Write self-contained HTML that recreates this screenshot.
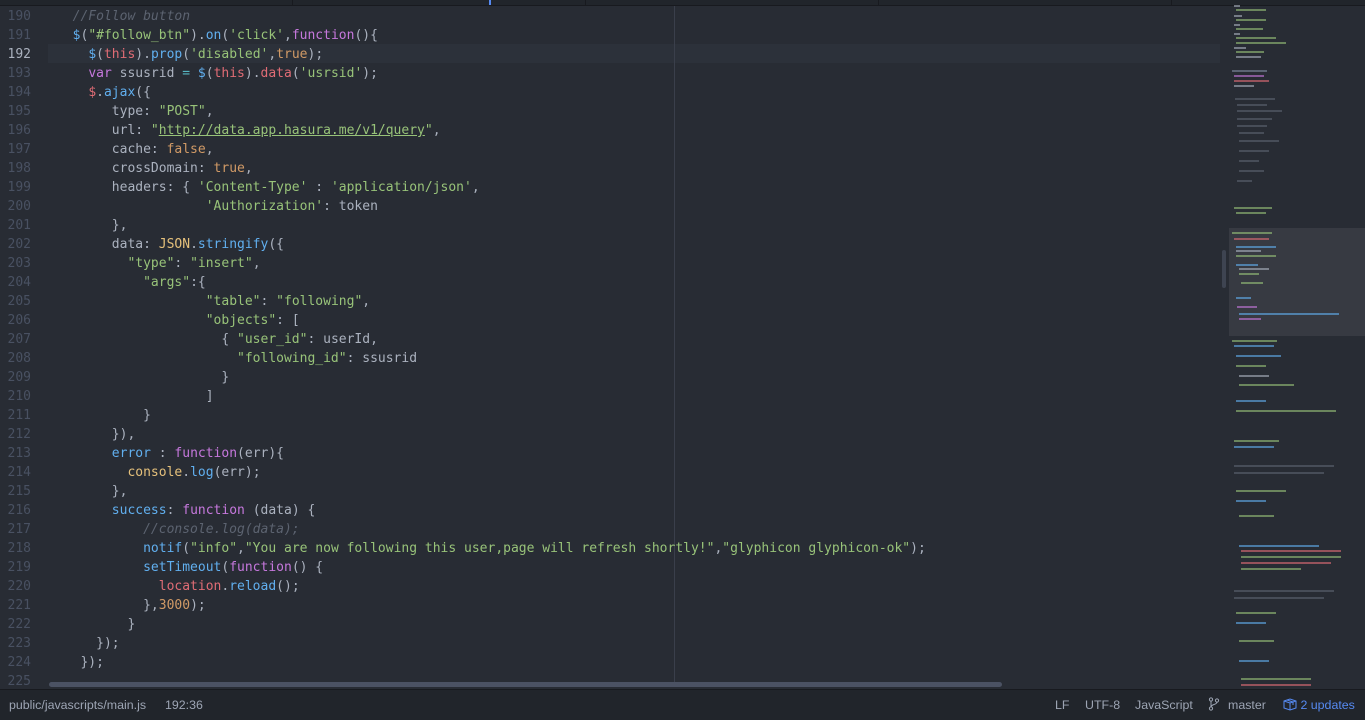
<!DOCTYPE html>
<html><head><meta charset="utf-8"><style>
html,body{margin:0;padding:0}
body{width:1365px;height:719px;background:#282c34;position:relative;overflow:hidden;font-family:"DejaVu Sans Mono","Liberation Mono",monospace;}
.tabs{position:absolute;left:0;top:0;width:1365px;height:5px;background:#21252b;border-bottom:1px solid #181a1f}
.tabs i{position:absolute;top:0;height:5px;border-left:1px solid #181a1f}
.cur{position:absolute;left:48px;top:44px;width:1172px;height:19px;background:#2c313a}
.guide{position:absolute;left:674px;top:6px;width:1px;height:676px;background:#3a3f4b}
.nums{position:absolute;left:0;top:7px;width:31px;text-align:right;font-size:13px;line-height:19px;color:#495162;white-space:pre;margin:0;font-family:inherit}
.nums b{color:#abb2bf;font-weight:normal}
pre.code{position:absolute;left:57px;top:7px;margin:0;font-size:13px;line-height:19px;color:#abb2bf;font-family:inherit}
.c{color:#5c6370;font-style:italic}.f{color:#61afef}.s{color:#98c379}.k{color:#c678dd}.r{color:#e06c75}.o{color:#d19a66}.y{color:#e5c07b}.q{color:#56b6c2}
.u{text-decoration:underline}
.mini{position:absolute;left:1229px;top:0;width:136px;height:689px;opacity:0.6}
.mini div{position:absolute;height:2px}
.hl{position:absolute;left:1229px;top:228px;width:136px;height:108px;background:rgba(255,255,255,0.07)}
.vs{position:absolute;left:1222px;top:250px;width:4px;height:38px;background:#3e4451;border-radius:2px}
.hs{position:absolute;left:49px;top:682px;width:953px;height:5px;background:#4b5263;border-radius:3px}
.status{position:absolute;left:0;top:689px;width:1365px;height:30px;background:#21252b;border-top:1px solid #181a1f;font-family:"Liberation Sans",sans-serif;font-size:12.4px;color:#9da5b4;line-height:30px}
.status span{position:absolute;top:0}
</style></head><body>
<div class="tabs"><i style="left:292px"></i><i style="left:585px"></i><i style="left:878px"></i><i style="left:1171px"></i><i style="left:489px;border-left:2px solid #568af2"></i></div>
<div class="cur"></div>
<div class="guide"></div>
<pre class="nums">190
191
<b>192</b>
193
194
195
196
197
198
199
200
201
202
203
204
205
206
207
208
209
210
211
212
213
214
215
216
217
218
219
220
221
222
223
224
225</pre>
<pre class="code">  <span class="c">//Follow button</span>
  <span class="f">$</span>(<span class="s">"#follow_btn"</span>).<span class="f">on</span>(<span class="s">'click'</span>,<span class="k">function</span>(){
    <span class="f">$</span>(<span class="r">this</span>).<span class="f">prop</span>(<span class="s">'disabled'</span>,<span class="o">true</span>);
    <span class="k">var</span> ssusrid <span class="q">=</span> <span class="f">$</span>(<span class="r">this</span>).<span class="r">data</span>(<span class="s">'usrsid'</span>);
    <span class="r">$</span>.<span class="f">ajax</span>({
       type: <span class="s">"POST"</span>,
       url: <span class="s">"<span class="u">http://data.app.hasura.me/v1/query</span>"</span>,
       cache: <span class="o">false</span>,
       crossDomain: <span class="o">true</span>,
       headers: { <span class="s">'Content-Type'</span> : <span class="s">'application/json'</span>,
                   <span class="s">'Authorization'</span>: token
       },
       data: <span class="y">JSON</span>.<span class="f">stringify</span>({
         <span class="s">"type"</span>: <span class="s">"insert"</span>,
           <span class="s">"args"</span>:{
                   <span class="s">"table"</span>: <span class="s">"following"</span>,
                   <span class="s">"objects"</span>: [
                     { <span class="s">"user_id"</span>: userId,
                       <span class="s">"following_id"</span>: ssusrid
                     }
                   ]
           }
       }),
       <span class="f">error</span> : <span class="k">function</span>(err){
         <span class="y">console</span>.<span class="f">log</span>(err);
       },
       <span class="f">success</span>: <span class="k">function</span> (data) {
           <span class="c">//console.log(data);</span>
           <span class="f">notif</span>(<span class="s">"info"</span>,<span class="s">"You are now following this user,page will refresh shortly!"</span>,<span class="s">"glyphicon glyphicon-ok"</span>);
           <span class="f">setTimeout</span>(<span class="k">function</span>() {
             <span class="r">location</span>.<span class="f">reload</span>();
           },<span class="o">3000</span>);
         }
     });
   });
</pre>
<div class="hl"></div>
<div class="vs"></div>
<div class="mini">
<div style="left:5px;top:5px;width:6px;background:#abb2bf"></div>
<div style="left:5px;top:15px;width:8px;background:#abb2bf"></div>
<div style="left:7px;top:9px;width:30px;background:#98c379"></div>
<div style="left:7px;top:19px;width:30px;background:#98c379"></div>
<div style="left:5px;top:24px;width:6px;background:#abb2bf"></div>
<div style="left:7px;top:28px;width:27px;background:#98c379"></div>
<div style="left:5px;top:33px;width:6px;background:#abb2bf"></div>
<div style="left:7px;top:37px;width:40px;background:#98c379"></div>
<div style="left:7px;top:42px;width:50px;background:#98c379"></div>
<div style="left:5px;top:47px;width:12px;background:#abb2bf"></div>
<div style="left:7px;top:51px;width:28px;background:#98c379"></div>
<div style="left:7px;top:56px;width:25px;background:#abb2bf"></div>
<div style="left:3px;top:70px;width:35px;background:#7f8aa0"></div>
<div style="left:5px;top:75px;width:30px;background:#c678dd"></div>
<div style="left:5px;top:80px;width:35px;background:#e06c75"></div>
<div style="left:5px;top:85px;width:20px;background:#abb2bf"></div>
<div style="left:6px;top:98px;width:40px;background:#5c6370"></div>
<div style="left:8px;top:104px;width:30px;background:#5c6370"></div>
<div style="left:8px;top:110px;width:45px;background:#5c6370"></div>
<div style="left:8px;top:118px;width:35px;background:#5c6370"></div>
<div style="left:8px;top:125px;width:30px;background:#5c6370"></div>
<div style="left:10px;top:132px;width:25px;background:#5c6370"></div>
<div style="left:10px;top:140px;width:40px;background:#5c6370"></div>
<div style="left:10px;top:150px;width:30px;background:#5c6370"></div>
<div style="left:10px;top:160px;width:20px;background:#5c6370"></div>
<div style="left:10px;top:170px;width:25px;background:#5c6370"></div>
<div style="left:8px;top:180px;width:15px;background:#5c6370"></div>
<div style="left:5px;top:207px;width:38px;background:#98c379"></div>
<div style="left:7px;top:212px;width:30px;background:#98c379"></div>
<div style="left:3px;top:232px;width:40px;background:#98c379"></div>
<div style="left:5px;top:238px;width:35px;background:#e06c75"></div>
<div style="left:7px;top:246px;width:40px;background:#61afef"></div>
<div style="left:7px;top:250px;width:25px;background:#abb2bf"></div>
<div style="left:7px;top:255px;width:40px;background:#98c379"></div>
<div style="left:7px;top:264px;width:22px;background:#61afef"></div>
<div style="left:10px;top:268px;width:30px;background:#abb2bf"></div>
<div style="left:10px;top:273px;width:20px;background:#98c379"></div>
<div style="left:12px;top:282px;width:22px;background:#98c379"></div>
<div style="left:7px;top:297px;width:15px;background:#61afef"></div>
<div style="left:8px;top:306px;width:20px;background:#c678dd"></div>
<div style="left:10px;top:313px;width:100px;background:#61afef"></div>
<div style="left:10px;top:318px;width:22px;background:#c678dd"></div>
<div style="left:3px;top:340px;width:45px;background:#98c379"></div>
<div style="left:5px;top:345px;width:40px;background:#61afef"></div>
<div style="left:7px;top:355px;width:45px;background:#61afef"></div>
<div style="left:7px;top:365px;width:30px;background:#98c379"></div>
<div style="left:10px;top:375px;width:30px;background:#abb2bf"></div>
<div style="left:10px;top:384px;width:55px;background:#98c379"></div>
<div style="left:7px;top:400px;width:30px;background:#61afef"></div>
<div style="left:7px;top:410px;width:100px;background:#98c379"></div>
<div style="left:5px;top:440px;width:45px;background:#98c379"></div>
<div style="left:5px;top:446px;width:40px;background:#61afef"></div>
<div style="left:5px;top:465px;width:100px;background:#5c6370"></div>
<div style="left:5px;top:472px;width:90px;background:#5c6370"></div>
<div style="left:7px;top:490px;width:50px;background:#98c379"></div>
<div style="left:7px;top:500px;width:30px;background:#61afef"></div>
<div style="left:10px;top:515px;width:35px;background:#98c379"></div>
<div style="left:10px;top:545px;width:80px;background:#61afef"></div>
<div style="left:12px;top:550px;width:100px;background:#e06c75"></div>
<div style="left:12px;top:556px;width:100px;background:#98c379"></div>
<div style="left:12px;top:562px;width:90px;background:#e06c75"></div>
<div style="left:12px;top:568px;width:60px;background:#98c379"></div>
<div style="left:5px;top:590px;width:100px;background:#5c6370"></div>
<div style="left:5px;top:597px;width:90px;background:#5c6370"></div>
<div style="left:7px;top:612px;width:40px;background:#98c379"></div>
<div style="left:7px;top:622px;width:30px;background:#61afef"></div>
<div style="left:10px;top:640px;width:35px;background:#98c379"></div>
<div style="left:10px;top:660px;width:30px;background:#61afef"></div>
<div style="left:12px;top:678px;width:70px;background:#98c379"></div>
<div style="left:12px;top:684px;width:70px;background:#e06c75"></div>
</div>
<div class="hs"></div>
<div class="status">
<span style="left:9px">public/javascripts/main.js</span>
<span style="left:165px">192:36</span>
<span style="left:1055px">LF</span>
<span style="left:1085px">UTF-8</span>
<span style="left:1135px">JavaScript</span>
<span style="left:1208px"><svg width="12" height="14" viewBox="0 0 12 14" style="vertical-align:-2px"><circle cx="3" cy="2.5" r="1.6" fill="none" stroke="#9da5b4"/><circle cx="3" cy="11.5" r="1.6" fill="none" stroke="#9da5b4"/><circle cx="9" cy="3.5" r="1.6" fill="none" stroke="#9da5b4"/><path d="M3 4v6M9 5c0 3-6 2-6 5" fill="none" stroke="#9da5b4"/></svg></span>
<span style="left:1228px">master</span>
<span style="left:1283px;color:#568af2"><svg width="14" height="13" viewBox="0 0 14 13" style="vertical-align:-2px"><path d="M1 3l6-2 6 2v7l-6 2-6-2z M1 3l6 2 6-2 M7 5v7 M4 2l6 2v3" fill="none" stroke="#568af2"/></svg> 2 updates</span>
</div>
</body></html>
